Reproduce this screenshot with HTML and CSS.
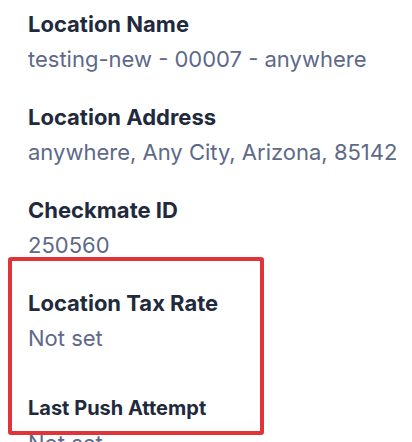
FILE: index.html
```html
<!DOCTYPE html>
<html lang="en">
<head>
  <meta charset="UTF-8">
  <title>Location Details</title>
  <link rel="stylesheet" href="styles.css">
</head>
<body>

  <div class="details">
    <div class="field">
      <div class="field-label">Location Name</div>
      <div class="field-value">testing-new - 00007 - anywhere</div>
    </div>

    <div class="field">
      <div class="field-label">Location Address</div>
      <div class="field-value">anywhere, Any City, Arizona, 85142</div>
    </div>

    <div class="field">
      <div class="field-label">Checkmate ID</div>
      <div class="field-value">250560</div>
    </div>

    <div class="field">
      <div class="field-label">Location Tax Rate</div>
      <div class="field-value">Not set</div>
    </div>

    <div class="field field-small">
      <div class="field-label">Last Push Attempt</div>
      <div class="field-value">Not set</div>
    </div>

    <!-- highlight around the tax rate block -->
    <div class="highlight"></div>
  </div>

</body>
</html>
```

FILE: styles.css
```css
* {
  box-sizing: border-box;
  font-family: Inter, 'Noto Sans', sans-serif;
}

body {
  margin: 0;
  background: #ffffff;
  color: #1f2a3c;
}

.details {
  position: relative;
  padding: 10px 0 0 28px;
  display: flex;
  flex-direction: column;
  gap: 30px;
}

.field-label {
  font-size: 22px;
  font-weight: 700;
  line-height: 28px;
  color: #1f2a3c;
}

.field-value {
  margin-top: 7px;
  font-size: 22px;
  line-height: 28px;
  color: #5e6989;
}

.field-small {
  margin-top: 12px;
}

.field-small .field-label {
  font-size: 20px;
}

.highlight {
  position: absolute;
  left: 8px;
  top: 257px;
  width: 256px;
  height: 178px;
  border: 4px solid #e0343a;
  border-radius: 3px;
}
```
